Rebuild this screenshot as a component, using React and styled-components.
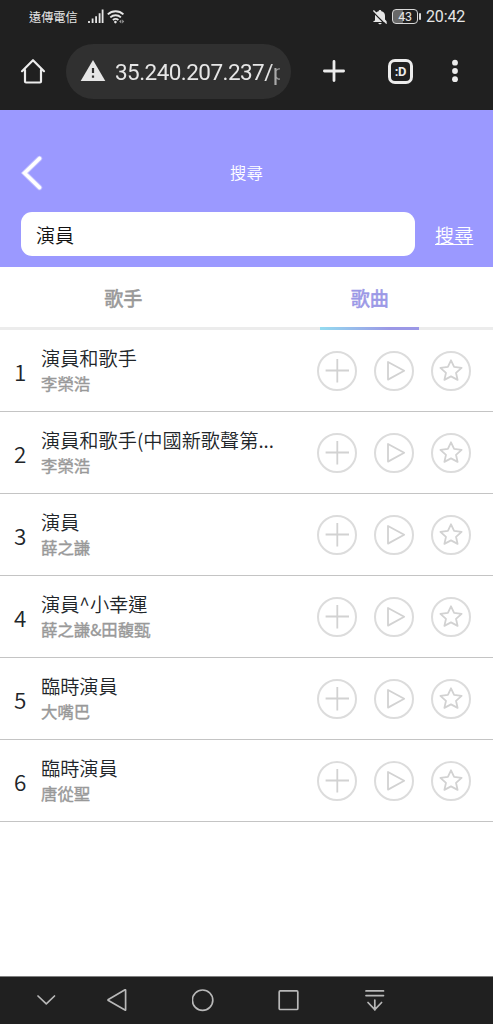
import React, { useState } from 'react';
import styled, { createGlobalStyle } from 'styled-components';

const songs = [
    { title: '演員和歌手', singer: '李榮浩' },
    { title: '演員和歌手(中國新歌聲第...', singer: '李榮浩' },
    { title: '演員', singer: '薛之謙' },
    { title: '演員^小幸運', singer: '薛之謙&田馥甄' },
    { title: '臨時演員', singer: '大嘴巴' },
    { title: '臨時演員', singer: '唐從聖' },
];

function StatusBar() {
    return (
        <StatusWrapper>
            <Carrier>遠傳電信</Carrier>
            <SignalIcon width="38" height="18" viewBox="0 0 38 18" fill="none" stroke="#e6e6e6">
                <path d="M2 15v-2M5.6 15v-4.5M9.1 15V8.2M12.6 15V5.3M15.6 15V1.5" strokeWidth="1.8" />
                <path d="M20.8 6.4c4.4-4.3 11.2-4.3 15.6 0M23.3 9.4c3.1-2.8 7.5-2.8 10.6 0M25.9 12c1.7-1.4 3.8-1.4 5.5 0" strokeWidth="1.9" />
                <circle cx="28.4" cy="14.1" r="1.3" fill="#e6e6e6" stroke="none" />
                <path d="M34.3 11.6v4l-2.2-2zM35.2 11.6v4l2-2z" fill="#999" stroke="none" />
            </SignalIcon>
            <StatusRight>
                <svg width="16" height="16" viewBox="0 0 16 16">
                    <path d="M3 11.6V6.8C3 4.4 4.4 2.8 6.6 2.3 6.7.6 9.2.6 9.4 2.3c2.2.5 3.6 2.1 3.6 4.5v3.8l1.6 1.7v.8H1.4v-.8zM6.3 13.9h3.4c-.4 1.9-3 1.9-3.4 0z" fill="#e6e6e6" />
                    <path d="M.4 2.2 13.5 15.4" stroke="#202020" strokeWidth="1.4" />
                    <path d="M1.4 1.4 14.7 14.5" stroke="#e6e6e6" strokeWidth="1.4" />
                </svg>
                <Battery>43</Battery>
                <BatteryTip />
                <Clock>20:42</Clock>
            </StatusRight>
        </StatusWrapper>
    );
}

function BrowserBar() {
    return (
        <BrowserWrapper>
            <svg width="26" height="26" viewBox="0 0 26 26" fill="none" stroke="#ececec" strokeWidth="2.2" strokeLinejoin="round" strokeLinecap="round">
                <path d="M2 13.2 13 2.2l11 11M5 12v11.5q0 1 1 1h14q1 0 1-1V12" />
            </svg>
            <AddressBar>
                <svg width="26" height="23" viewBox="0 0 26 23">
                    <path d="M13 0 25.3 21H.7z" fill="#e6e6e6" />
                    <path d="M13 8v5M13 15.4v2.4" stroke="#303030" strokeWidth="2.2" />
                </svg>
                <Address>35.240.207.237/p</Address>
            </AddressBar>
            <PlusIcon width="22" height="22" viewBox="0 0 22 22" stroke="#ececec" strokeWidth="2.8" strokeLinecap="round">
                <path d="M11 1.4v19.2M1.4 11h19.2" />
            </PlusIcon>
            <TabCount>:D</TabCount>
            <DotsIcon width="6" height="24" viewBox="0 0 6 24" fill="#ececec">
                <circle cx="3" cy="3.7" r="2.9" />
                <circle cx="3" cy="12" r="2.9" />
                <circle cx="3" cy="20.2" r="2.9" />
            </DotsIcon>
        </BrowserWrapper>
    );
}

function SongRow({ index, song }) {
    return (
        <Row>
            <Num>{index}</Num>
            <SongInfo>
                <SongTitle>{song.title}</SongTitle>
                <Singer>{song.singer}</Singer>
            </SongInfo>
            <Actions>
                <RoundButton>
                    <svg width="24" height="24" viewBox="0 0 24 24"><path d="M12.3 0v23.5M.6 11.5h23.4" /></svg>
                </RoundButton>
                <RoundButton>
                    <svg width="24" height="24" viewBox="0 0 24 24"><path d="M6 3v17.6L22.2 11.8z" /></svg>
                </RoundButton>
                <RoundButton>
                    <svg width="24" height="24" viewBox="0 0 24 24"><path d="m12 1.3 3.1 6.6 7.5.9-5.6 5 1.6 7.1-6.6-3.5-6.6 3.5L7 13.8 1.4 8.8l7.5-.9z" /></svg>
                </RoundButton>
            </Actions>
        </Row>
    );
}

function NavBar() {
    return (
        <NavWrapper>
            <svg width="22" height="24" viewBox="0 0 22 24"><path d="m3 8 8.3 7.8L19.5 8" /></svg>
            <svg width="22" height="24" viewBox="0 0 22 24"><path d="M19.6 2.2v19.6q0 .6-.6.3L2.4 12.6q-.8-.6 0-1.1L19 1.8q.6-.2.6.4z" /></svg>
            <svg width="22" height="24" viewBox="0 0 22 24"><circle cx="10.6" cy="12.2" r="10.2" /></svg>
            <svg width="22" height="24" viewBox="0 0 22 24"><rect x="1.2" y="2.9" width="18.6" height="18.6" rx="1" /></svg>
            <svg width="22" height="24" viewBox="0 0 22 24"><path d="M2 2.9h17.5M2 7.6h17.5M10.8 12v10M4 14.5l6.8 7.2 6.8-7.2" /></svg>
        </NavWrapper>
    );
}

export default function App() {
    const [keyword, setKeyword] = useState('演員');
    return (
        <Page>
            <GlobalStyle />
            <StatusBar />
            <BrowserBar />
            <Header>
                <TitleBar>
                    <svg width="24" height="36" viewBox="0 0 24 36" fill="none" stroke="#fff" strokeLinecap="round">
                        <path d="M18.5 3.5 3.5 18l15 14.5" strokeWidth="5.4" opacity=".4" />
                        <path d="M18.5 3.5 3.5 18l15 14.5" strokeWidth="3.6" />
                    </svg>
                    <PageTitle>搜尋</PageTitle>
                </TitleBar>
                <SearchBar>
                    <SearchInput value={keyword} onChange={(e) => setKeyword(e.target.value)} />
                    <SearchLink>搜尋</SearchLink>
                </SearchBar>
            </Header>
            <Tabs>
                <Tab>歌手</Tab>
                <Tab $active>歌曲</Tab>
            </Tabs>
            <List>
                {songs.map((song, i) => (
                    <SongRow key={i} index={i + 1} song={song} />
                ))}
            </List>
            <NavBar />
        </Page>
    );
}

const GlobalStyle = createGlobalStyle`
* {
    box-sizing: border-box;
}
body {
    margin: 0;
    background: #fff;
    font-family: "Noto Sans CJK TC", sans-serif;
}
svg {
    display: block;
    flex-shrink: 0;
}
`;

const Page = styled.div`
display: flex;
flex-direction: column;
width: 493px;
height: 1024px;
overflow: hidden;
`;

const StatusWrapper = styled.div`
display: flex;
align-items: center;
height: 33px;
padding: 0 28px 0 29px;
background: #202020;
color: #e6e6e6;
`;

const Carrier = styled.span`
font-size: 12.2px;
line-height: 16px;
`;

const SignalIcon = styled.svg`
margin-left: 9px;
`;

const StatusRight = styled.div`
display: flex;
align-items: center;
margin-left: auto;
`;

const Battery = styled.span`
width: 26px;
height: 15px;
margin-left: 4px;
border: 1.5px solid #d8d8d8;
border-radius: 4px;
background: linear-gradient(90deg, #686868 43%, #202020 43%);
font: 12.5px/14px Roboto, sans-serif;
letter-spacing: -0.4px;
text-align: center;
`;

const BatteryTip = styled.span`
width: 2px;
height: 7px;
margin-left: 1px;
border-radius: 1px;
background: #d8d8d8;
`;

const Clock = styled.span`
width: 39px;
margin-left: 5px;
padding-top: 1px;
font: 16px/20px Roboto, sans-serif;
letter-spacing: -0.15px;
white-space: nowrap;
`;

const BrowserWrapper = styled.div`
display: flex;
align-items: center;
height: 77px;
padding: 0 0 1px 20px;
background: #202020;
`;

const AddressBar = styled.div`
display: flex;
align-items: center;
width: 225px;
height: 55px;
margin-left: 20px;
padding: 0 11px 0 14px;
border-radius: 28px;
background: #303030;
`;

const Address = styled.span`
width: 165px;
margin-left: 9px;
padding-top: 1px;
overflow: hidden;
color: #e6e6e6;
font: 22.5px/30px Roboto, sans-serif;
letter-spacing: -0.55px;
white-space: nowrap;
mask-image: linear-gradient(90deg, #000 94%, rgba(0, 0, 0, 0.4) 100%);
`;

const PlusIcon = styled.svg`
margin-left: 32px;
`;

const TabCount = styled.span`
width: 25px;
height: 25px;
margin-left: 43px;
border: 3px solid #ececec;
border-radius: 7px;
color: #ececec;
font: bold 13px/19px Roboto, sans-serif;
letter-spacing: -0.3px;
text-align: center;
`;

const DotsIcon = styled.svg`
margin-left: 39px;
`;

const Header = styled.header`
height: 157px;
padding-top: 44px;
background: #9b99ff;
color: #fff;
`;

const TitleBar = styled.div`
display: grid;
grid-template-columns: 60px 1fr 60px;
align-items: center;
height: 38px;

svg {
    margin-left: 21px;
}
`;

const PageTitle = styled.h1`
margin: 0 0 2px;
font-size: 16.4px;
font-weight: 350;
text-align: center;
`;

const SearchBar = styled.div`
display: flex;
align-items: center;
margin-top: 20px;
padding: 0 19px 0 21px;
`;

const SearchInput = styled.input`
flex: none;
width: 394px;
height: 44px;
padding: 2px 15px 0;
border: 0;
border-radius: 11px;
outline: 0;
background: #fff;
color: #111;
font: 350 19.1px "Noto Sans CJK TC", sans-serif;
`;

const SearchLink = styled.a`
margin-left: 20px;
padding-top: 1px;
color: #fff;
font-size: 19.2px;
font-weight: 350;
line-height: 28px;
text-decoration: underline;
white-space: nowrap;
`;

const Tabs = styled.nav`
display: grid;
grid-template-columns: 1fr 1fr;
height: 63px;
border-bottom: 3px solid #ececec;
`;

const Tab = styled.a`
position: relative;
height: 60px;
color: ${props => (props.$active ? '#9b98e6' : '#999')};
font-size: 19.1px;
line-height: 62px;
text-align: center;
-webkit-text-stroke: 0.6px;

&::after {
    content: '';
    display: ${props => (props.$active ? 'block' : 'none')};
    position: absolute;
    left: 73.5px;
    bottom: -3px;
    width: 99px;
    height: 3px;
    background: linear-gradient(90deg, #94dcf0, #9b98e6 70%);
}
`;

const List = styled.div`
flex: 1;
background: #fff;
`;

const Row = styled.div`
display: flex;
align-items: center;
height: 82px;
padding: 0 22px 0 14px;
border-bottom: 1.4px solid #c4c4c4;
color: #212529;
`;

const Num = styled.span`
width: 27px;
padding-top: 1px;
font-size: 22.5px;
font-weight: 350;
line-height: 32px;
`;

const SongInfo = styled.div`
width: 240px;
padding-bottom: 4px;
`;

const SongTitle = styled.div`
font-size: 19.2px;
font-weight: 350;
line-height: 29px;
white-space: nowrap;
`;

const Singer = styled.div`
color: #999;
font-size: 16.4px;
line-height: 21px;
-webkit-text-stroke: 0.4px;
`;

const Actions = styled.div`
display: flex;
gap: 17px;
margin-left: auto;
`;

const RoundButton = styled.button`
display: flex;
align-items: center;
justify-content: center;
width: 40px;
height: 40px;
padding: 0;
border: 2px solid #dcdcdc;
border-radius: 50%;
background: #fff;

svg {
    fill: none;
    stroke: #d2d2d2;
    stroke-width: 1.8;
    stroke-linejoin: round;
}
`;

const NavWrapper = styled.footer`
display: flex;
gap: 64px;
height: 48px;
padding: 11px 0 0 35px;
border-top: 1px solid #808080;
background: #202020;

svg {
    fill: none;
    stroke: #b8b8b8;
    stroke-width: 1.7;
    stroke-linecap: round;
    stroke-linejoin: round;
}

svg:first-child {
    margin-right: -15px;
}
`;
